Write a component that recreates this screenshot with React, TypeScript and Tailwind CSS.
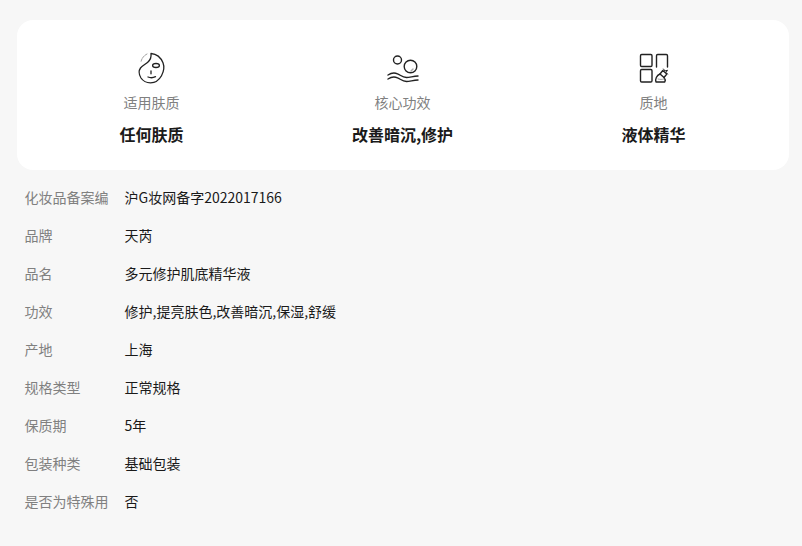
const FONT = "font-['Noto_Sans_CJK_SC','Noto_Sans_CJK_JP',sans-serif]";

function FaceIcon() {
  return (
    <svg width="32" height="32" viewBox="0 0 32 32" fill="none" stroke="#222" strokeWidth="1.3" strokeLinecap="round" strokeLinejoin="round">
      <path d="M15 1.500c.4 3.500-.8 6.500-3 8.500-2.200 2-5.500 3.500-7.500 6-1.800 2.500-1.600 6.500.5 10 2 3 5.500 4.800 9.500 4.800 4.500 0 8.500-2.500 11-7 2.300-4.300 3-9 1.500-13C25 6 20.500 2 15 1.500z" />
      <path d="M11 2C8 3.500 5.500 6.500 5 10" strokeWidth="0.7" strokeDasharray="2.500 1" stroke="#777" />
      <ellipse cx="20" cy="13.500" rx="3.400" ry="2" />
      <path d="M15 19v2.800" />
      <path d="M12 25c2.300 1 5 1 7.500-.3" />
    </svg>
  );
}

function WaveIcon() {
  return (
    <svg width="32" height="32" viewBox="0 0 32 32" fill="none" stroke="#222" strokeWidth="1.400" strokeLinecap="round">
      <circle cx="10.500" cy="8" r="4" />
      <circle cx="23.500" cy="14.500" r="6.300" />
      <path d="M24 19l2-2" stroke="#aaa" />
      <path d="M1 23c3-2 6.500-2.500 9.500-1.200 3 1.300 5 3.700 9 3.700 3 0 6-1 11.500-1.500" />
      <path d="M1 27c3-2 6.500-2.500 9.500-1.200 3 1.300 5 3.700 9 3.700 3 0 6-1 11.500-1.500" />
    </svg>
  );
}

function GridIcon() {
  return (
    <svg width="32" height="32" viewBox="0 0 32 32" fill="none" stroke="#222" strokeWidth="1.400" strokeLinecap="round" strokeLinejoin="round">
      <rect x="2.500" y="2.500" width="11.500" height="12" rx="1.200" />
      <path d="M18.500 15V3.700c0-.7.500-1.200 1.200-1.200h8.600c.7 0 1.200.5 1.200 1.200V15" />
      <rect x="2.500" y="17.500" width="11.500" height="12.500" rx="1.200" />
      <path d="M18 30c-1-3 .5-6.500 4-8l4 3.500c1.300 1.500 1.500 3.200.8 4.500z" />
      <path d="M22 22l2.800-3.500 4 3.500-2.800 3.500" />
      <path d="M25.500 17l1.500 2 2.500-.8-1.500 2.300 1.500 1.500" strokeWidth="1" />
      <path d="M20 27c2 .6 4 .6 6 0" strokeWidth="0.800" stroke="#888" />
    </svg>
  );
}

const features = [
  { icon: <FaceIcon />, label: "适用肤质", value: "任何肤质" },
  { icon: <WaveIcon />, label: "核心功效", value: "改善暗沉,修护" },
  { icon: <GridIcon />, label: "质地", value: "液体精华" },
];

const rows = [
  ["化妆品备案编", "沪G妆网备字2022017166"],
  ["品牌", "天芮"],
  ["品名", "多元修护肌底精华液"],
  ["功效", "修护,提亮肤色,改善暗沉,保湿,舒缓"],
  ["产地", "上海"],
  ["规格类型", "正常规格"],
  ["保质期", "5年"],
  ["包装种类", "基础包装"],
  ["是否为特殊用", "否"],
];

export default function App() {
  return (
    <div className={`w-[802px] h-[546px] overflow-hidden bg-[#f7f7f7] px-[17px] pt-[20px] ${FONT}`}>
      <div className="h-[150px] w-[772px] rounded-[16px] bg-white flex justify-center pt-[32px] pr-[1px]">
        {features.map((f) => (
          <div key={f.label} className="w-[251px] flex flex-col items-center">
            <div className="h-[32px] w-[32px]">{f.icon}</div>
            <div className="mt-[8px] text-[14px] leading-[20px] text-[#808080]">{f.label}</div>
            <div className="mt-[10px] text-[16px] leading-[24px] font-bold text-[#1a1a1a]">{f.value}</div>
          </div>
        ))}
      </div>
      <div className="mt-[8px] pl-[7.5px] flex flex-col">
        {rows.map(([k, v]) => (
          <div key={k} className="h-[38px] flex items-center text-[14px] leading-[20px]">
            <div className="w-[100px] text-[#808080] whitespace-nowrap">{k}</div>
            <div className="text-[#1a1a1a] whitespace-nowrap">{v}</div>
          </div>
        ))}
      </div>
    </div>
  );
}
